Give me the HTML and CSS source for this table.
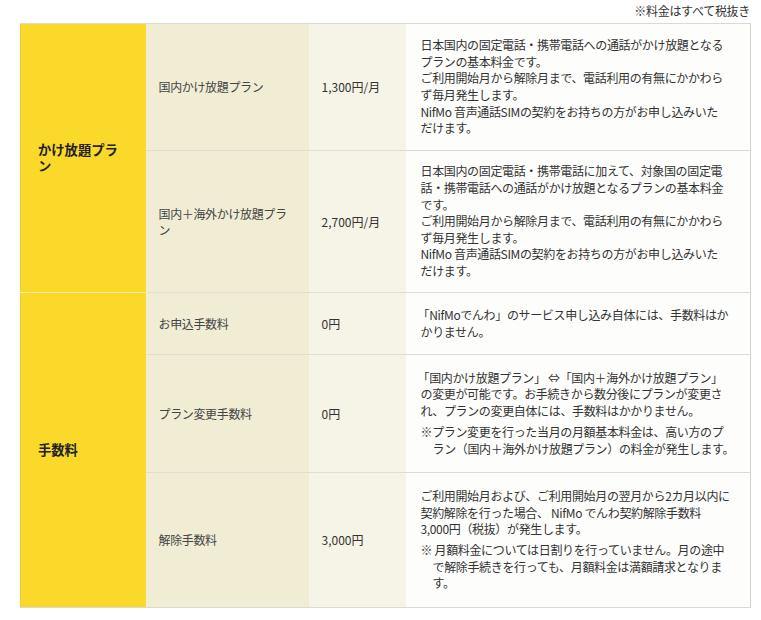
FILE: index.html
```html
<!DOCTYPE html>
<html lang="ja">
<head>
<meta charset="utf-8">
<title>料金</title>
<link rel="stylesheet" href="styles.css">
</head>
<body>
<div class="page">
  <p class="note">※料金はすべて税抜き</p>
  <table class="fees">
    <colgroup>
      <col class="c-cat">
      <col class="c-name">
      <col class="c-price">
      <col class="c-desc">
    </colgroup>
    <tbody>
      <tr class="r1">
        <th class="cat" rowspan="2">かけ放題プラン</th>
        <td class="name">国内かけ放題プラン</td>
        <td class="price">1,300円/月</td>
        <td class="desc">
          <p>日本国内の固定電話・携帯電話への通話がかけ放題となる<br>プランの基本料金です。</p>
          <p>ご利用開始月から解除月まで、電話利用の有無にかかわら<br>ず毎月発生します。</p>
          <p>NifMo 音声通話SIMの契約をお持ちの方がお申し込みいた<br>だけます。</p>
        </td>
      </tr>
      <tr class="r2 group-end">
        <td class="name">国内＋海外かけ放題プラン</td>
        <td class="price">2,700円/月</td>
        <td class="desc">
          <p>日本国内の固定電話・携帯電話に加えて、対象国の固定電<br>話・携帯電話への通話がかけ放題となるプランの基本料金<br>です。</p>
          <p>ご利用開始月から解除月まで、電話利用の有無にかかわら<br>ず毎月発生します。</p>
          <p>NifMo 音声通話SIMの契約をお持ちの方がお申し込みいた<br>だけます。</p>
        </td>
      </tr>
      <tr class="r3">
        <th class="cat cat-last" rowspan="3">手数料</th>
        <td class="name">お申込手数料</td>
        <td class="price">0円</td>
        <td class="desc">
          <p><span class="bracket">「</span>NifMoでんわ」のサービス申し込み自体には、手数料はか<br>かりません。</p>
        </td>
      </tr>
      <tr class="r4">
        <td class="name">プラン変更手数料</td>
        <td class="price">0円</td>
        <td class="desc">
          <p><span class="bracket">「</span>国内かけ放題プラン」 ⇔「国内＋海外かけ放題プラン」<br>の変更が可能です。お手続きから数分後にプランが変更さ<br>れ、プランの変更自体には、手数料はかかりません。</p>
          <p class="memo memo-a">※プラン変更を行った当月の月額基本料金は、高い方のプ<br>ラン（国内＋海外かけ放題プラン）の料金が発生します。</p>
        </td>
      </tr>
      <tr class="r5">
        <td class="name">解除手数料</td>
        <td class="price">3,000円</td>
        <td class="desc">
          <p>ご利用開始月および、ご利用開始月の翌月から2カ月以内に<br>契約解除を行った場合、 NifMo でんわ契約解除手数料<br>3,000円（税抜）が発生します。</p>
          <p class="memo memo-b">※ 月額料金については日割りを行っていません。月の途中<br>で解除手続きを行っても、月額料金は満額請求となりま<br>す。</p>
        </td>
      </tr>
    </tbody>
  </table>
</div>
</body>
</html>
```

FILE: styles.css
```css
html, body {
  margin: 0;
  padding: 0;
  background: #ffffff;
}

body {
  font-family: "Noto Sans CJK JP", "Noto Sans", sans-serif;
  font-size: 12px;
  color: #333333;
}

.page {
  width: 761px;
  padding-top: 3px;
}

.note {
  margin: 0 11px 4px 0;
  text-align: right;
  line-height: 16px;
  letter-spacing: -0.3px;
  color: #333333;
}

.fees {
  margin-left: 20px;
  width: 730px;
  table-layout: fixed;
  border-collapse: collapse;
  border-top: 1px solid #dcd9cf;
  border-right: 1px solid #d6d4cc;
  border-bottom: 1px solid #dcd9cf;
  border-left: 1px solid #e8cd3a;
}

.c-cat { width: 125px; }
.c-name { width: 163px; }
.c-price { width: 97px; }
.c-desc { width: 345px; }

.fees th,
.fees td {
  padding: 0;
  vertical-align: middle;
  text-align: left;
}

.r1 { height: 127px; }
.r2 { height: 142px; }
.r3 { height: 62px; }
.r4 { height: 118px; }
.r5 { height: 135px; }

.cat {
  background: #fad92b;
  font-weight: bold;
  font-size: 13.3px;
  line-height: 16px;
  color: #222222;
  padding: 0 20px 0 17px !important;
  border-bottom: 1px solid #fbeda2;
}

.cat-last {
  border-bottom: none;
}

.name {
  background: #f1edd5;
  padding: 0 18px 0 13px !important;
  line-height: 16px;
  color: #444444;
  letter-spacing: -0.35px;
  border-bottom: 1px solid #e2dfd1;
}

.price {
  background: #f6f3e7;
  padding: 0 8px 0 13px !important;
  line-height: 16px;
  color: #333333;
  border-bottom: 1px solid #e2dfd1;
}

.desc {
  background: #fdfdfb;
  padding: 0 10px 0 15px !important;
  border-bottom: 1px solid #dedbd2;
}

.r5 .name,
.r5 .price,
.r5 .desc {
  border-bottom: none;
}

.desc p {
  margin: 0;
  line-height: 16.6px;
  letter-spacing: -0.35px;
  white-space: nowrap;
}

.bracket {
  margin-left: -3px;
}

.memo {
  padding-left: 1em;
  text-indent: -1em;
}

.memo-a {
  margin-top: 5px !important;
}

.memo-b {
  margin-top: 4px !important;
}
```
